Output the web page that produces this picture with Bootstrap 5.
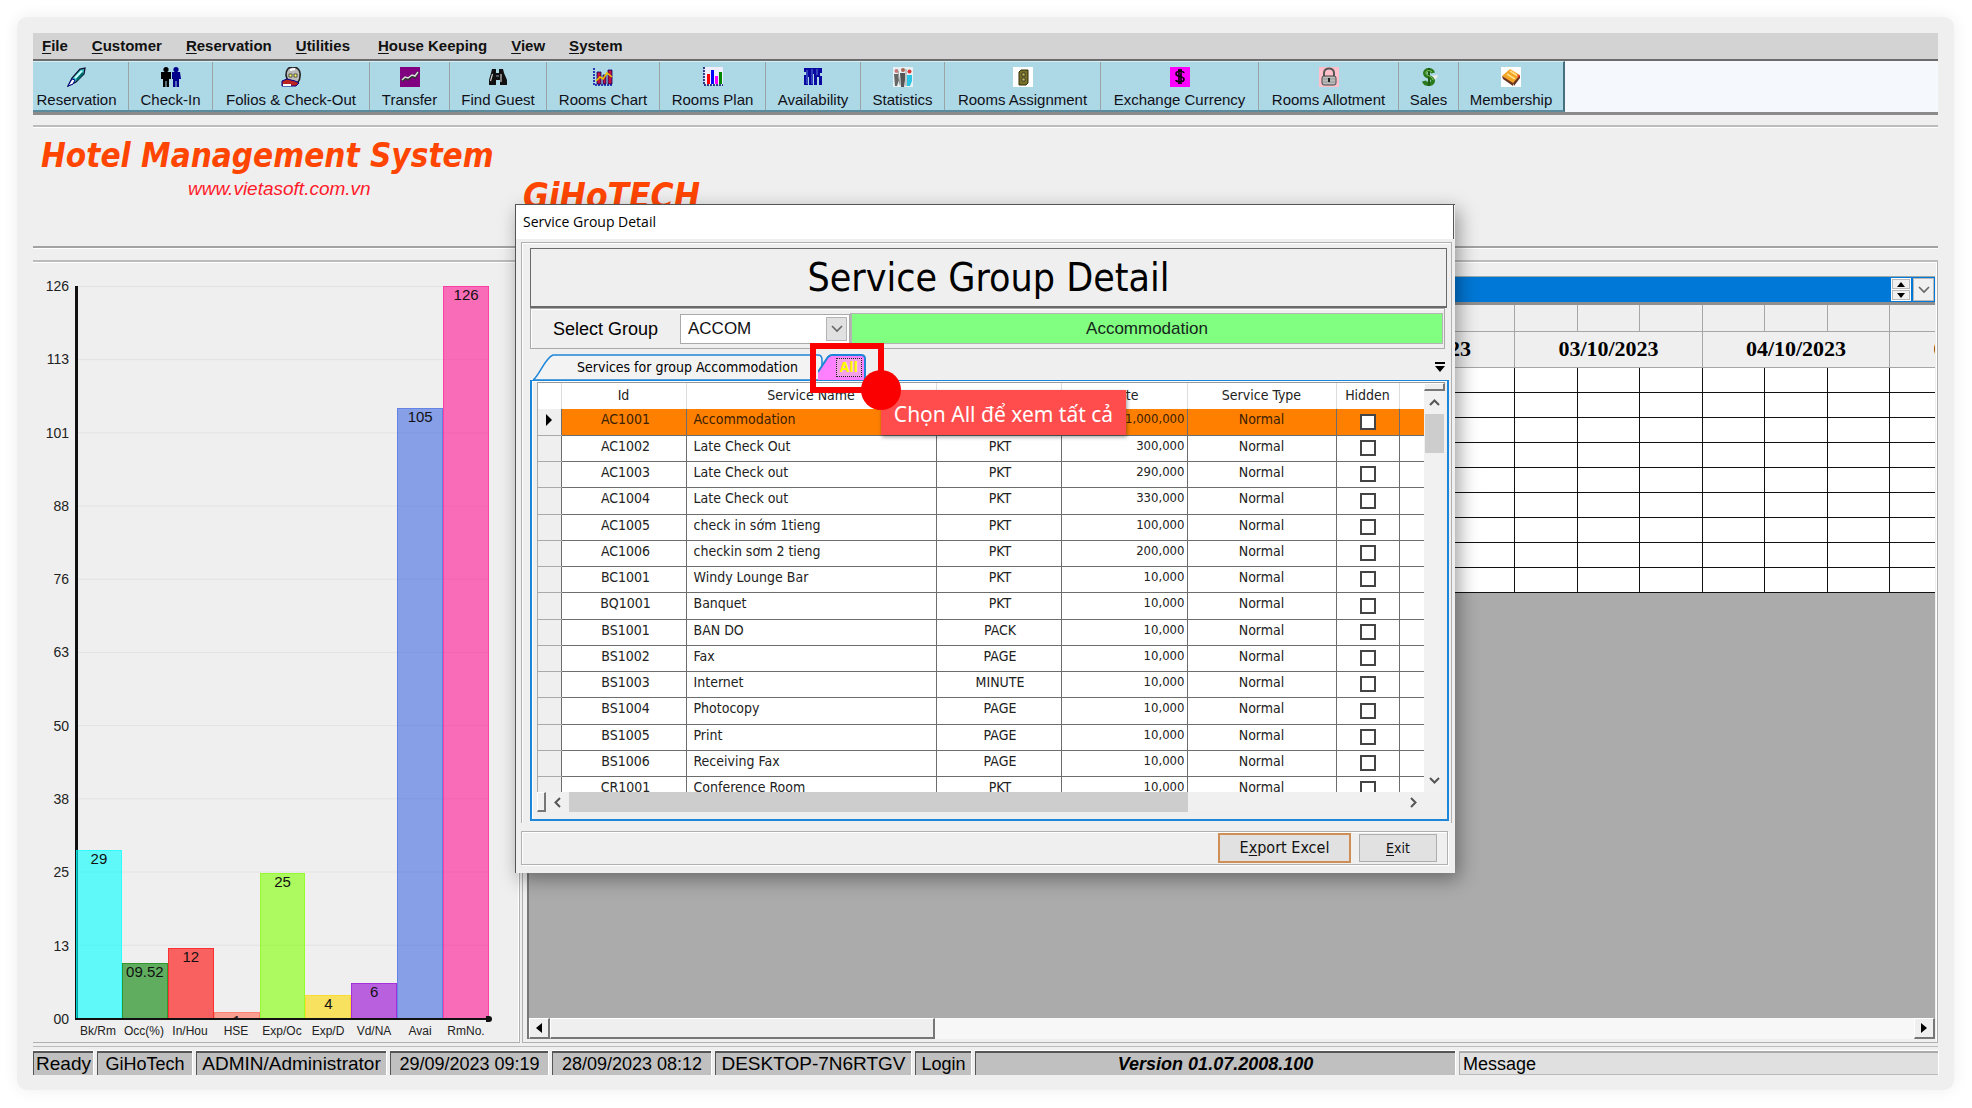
<!DOCTYPE html>
<html lang="vi">
<head>
<meta charset="utf-8">
<meta name="viewport" content="width=device-width, initial-scale=1">
<title>Hotel Management System</title>
<link href="https://cdn.jsdelivr.net/npm/bootstrap@5.3.0/dist/css/bootstrap.min.css" rel="stylesheet">
<style>
:root{--face:#efefef;--line:#a9a9a9;--blue:#1e86d8}
body{background:#fff;color:#000;font-family:"Liberation Sans",Arial,sans-serif;font-size:15px;line-height:18px}
button{color:inherit;font:inherit}
.shell{min-height:100vh;padding:17px 18px 18px 17px}
.frame{min-width:0;background:var(--face);border-radius:10px;box-shadow:0 0 16px rgba(0,0,0,.07);padding:16px 16px 15px}
.app{min-width:0}
.menubar{background:#d3d3d3;height:28px;border-bottom:2px solid #6c6c6c;padding-left:9px;gap:24px;font-weight:bold}
.menubar a{color:#111;text-decoration:none}
u{text-underline-offset:2px}
.toolbar{background:#f5f8fd;height:54px;border-bottom:3px solid #8b8b8b}
.toolset{background:#add8e6;border-top:1px solid #d6eef6;border-right:2px solid #47707f;border-bottom:2px solid #5b8b9c}
.tool{background:none;border:0;border-right:1px solid #9aa3a6;padding:5px 0 0;gap:4px;color:#101018;white-space:nowrap}
.tool:last-child{border-right:0}
.tool svg{width:20px;height:20px}
.w1{width:96px;padding-right:8px}.w2{width:84px}.w3{width:157px}.w4{width:80px}.w5{width:97px}.w6{width:113px}.w7{width:106px}.w8{width:95px}.w9{width:84px}.w10{width:156px}.w11{width:158px}.w12{width:140px}.w13{width:60px}.w14{width:104px}
.banner{height:123px;margin-top:10px;border-top:2px solid #bcbcbc;border-bottom:2px solid #a3a3a3;box-shadow:inset 0 1px #fff,0 1px #fff}
.brand{width:490px;padding:10px 0 0 8px;color:#ff4500}
.brand2{padding-top:50px;color:#ff4500}
.bigname{font:italic bold 33px/38px "DejaVu Sans Condensed","DejaVu Sans",sans-serif;margin:0;white-space:nowrap}
.brand2 .bigname{font-size:35px}
.site{font-style:italic;font-size:19px;line-height:28px;color:#ff1a2a;padding-left:147px}
.work{margin-top:12px;border-top:2px solid #bcbcbc}
.pane{border:1px solid #b0b0b0;border-width:0 1px 1px 0;box-shadow:inset 0 1px #fff,inset -1px 0 #fff}
.chartpane{width:487px;padding:24px 30px 2px 0}
.ylab{width:36px;margin:-8px 6px 13px 0;font-size:14px;line-height:16px;text-align:right;color:#222}
.plot{border-left:3px solid #111;border-bottom:2px solid #111;background:linear-gradient(#e2e2e2 1px,transparent 1px) 0 0/100% 10%}
.plot i{right:-3px;bottom:-4px;width:6px;height:6px;background:#111;border-radius:0 3px 3px 0}
.colbar{flex:1 1 0;text-align:center;font-size:15px;line-height:16px;overflow:hidden;background:rgba(var(--c),.6);border:1px solid rgba(var(--c),.5);border-bottom:0;color:#111}
.colbar:first-child{margin-left:-2px}
.xlab{height:20px;font-size:12px;line-height:22px;color:#222}
.xlab span{flex:1 1 0;text-align:center}
.planpane{margin-left:2px;border-left:1px solid #b0b0b0;padding:14px 2px 3px 4px;min-width:0}
.plan{border-left:2px solid #777;min-width:0}
.planbar{background:#0078d7;height:29px;border-top:1px solid #9aa;border-bottom:3px solid #8f8f8f;padding:1px 1px;gap:2px}
.spin{width:20px;background:#fff;padding:1px;gap:1px}
.spin button,.drop{background:#f0f0f0;border:1px solid #b9b9b9;padding:0;line-height:0}
.drop{width:21px}
.plangrid{background:#ababab;overflow:hidden;min-width:0}
.plangrid table{table-layout:fixed;width:1548px;border-collapse:collapse;background:#fff}
.plangrid col{width:62px}.plangrid col:nth-child(odd){width:63px}.plangrid col:first-child{width:48px}
.plangrid th{background:var(--face);border:1px solid #a6a6a6;border-top:0;padding:0;height:26px}
.plangrid tr+tr th{height:36px;font:bold 22px/24px "Liberation Serif",serif;text-align:center}
.plangrid td{border:1px solid #111;height:25px;padding:0}
.plangrid thead th:first-child{border-left:0}
.hbar{height:21px;background:#f7f7f7}
.hbar button,.hbar div{background:var(--face);border:1px solid #fff;border-right:2px solid #777;border-bottom:2px solid #777;padding:0;line-height:0}
.hbar button{width:21px}
.hbar div{width:385px}
.status{margin-top:3px;padding-top:4px;border-top:1px solid #bbb;gap:4px;font-size:18px;line-height:22px;white-space:nowrap}
.status span{background:#c0c0c0;border-top:2px solid #555;border-left:1px solid #555;height:24px;box-shadow:0 -1px #fff,1px 0 #fff;text-align:center}
.status .msg{background:#e0e0e0;border-top-color:#aaa;border-left-color:#aaa;border-bottom:1px solid #bbb;text-align:left;padding-left:3px}
.status .wide{font-size:19px}
.s1{width:60px}.s2{width:95px}.s3{width:190px}.s4{width:158px}.s5{width:159px}.s6{width:196px}.s7{width:56px}.s8{width:480px}

/* dialog window */
.dlg{position:absolute;left:482px;top:171px;width:940px;background:var(--face);border-left:1px solid #555;border-top:1px solid #555;box-shadow:4px 6px 18px rgba(0,0,0,.38);font-family:"DejaVu Sans Condensed","DejaVu Sans",sans-serif;font-size:14px}
.dlgtitle{background:#fff;border-right:1px solid #555;height:34px;margin-right:1px;padding-left:7px;font:14px/34px "Open Sans",sans-serif}
.dlgbody{margin:3px 3px 0 5px;border:1px solid #b0b0b0;border-bottom:0;box-shadow:inset 1px 1px #fff;padding:5px 2px 2px 8px}
.heading{margin:0 2px 0 0;border:1px solid #6a6a6a;border-bottom-width:2px;height:60px;font-size:39px;line-height:57px;font-weight:normal;text-align:center}
.pick{border:1px solid #a9a9a9;height:41px;margin-right:4px;padding:4px 1px 4px 22px;font-family:"Liberation Sans",sans-serif;box-shadow:inset 1px 1px #fff}
.pick label{font-size:18px;width:127px}
.pick select{appearance:none;border:1px solid #a9a9a9;background:#fff;width:170px;height:30px;padding-left:7px;font-size:17px;color:#111;border-radius:0}
.pick .arrow{right:3px;top:3px;bottom:3px;width:21px;background:#e1e1e1;border:1px solid #b4b4b4;pointer-events:none}
.pick output{background:#80ff80;border:1px solid #b4b4b4;border-left:2px solid #b4b4b4;font-size:17px;color:#15251a}
.tabs{height:26px;margin:5px 4px 0 3px}
.tabs button{background:none;border:0;padding:0;height:26px;z-index:1;white-space:nowrap}
.tabs svg.shape{position:absolute;left:0;top:0;z-index:-1}
.tab1{width:290px;padding-left:44px!important;text-align:left}
.tab2{width:48px;margin-left:-5px;padding-left:14px!important;color:#ff0;font-weight:bold!important;z-index:2!important}
.tab2 span{border:1px dotted #222;padding:0 3px;line-height:17px;display:inline-block;background:#f3a0e8}
.sheet{border:2px solid var(--blue);border-top-width:1px;height:441px;padding:1px 2px 6px 5px;box-shadow:inset 1px 1px #fff}
.viewport{height:410px;overflow:hidden;border-top:1px solid #999;border-left:1px solid #aaa}
.rows{border-collapse:collapse;table-layout:fixed;width:100%;background:#fff;color:#222}
.rows th{height:26px;padding:0 0 2px;font-weight:normal;text-align:center;border-right:1px solid #ddd;white-space:nowrap}
.rows td{height:26px;padding:0 0 5px;border:1px solid #6d6d6d;border-top:0;line-height:16px;text-align:center;white-space:nowrap}
.rows tbody tr:nth-child(4n) td{height:27px}
.rows td:first-child{background:var(--face);border-left:0;border-bottom-color:#aaa}
.rows td:nth-child(2){padding-left:4px}
.rows td:nth-child(3){text-align:left;padding-left:7px}
.rows td:nth-child(4){padding-left:3px}
.rows td:nth-child(5){text-align:right;padding-right:2px;font-size:13px}
.rows td:nth-child(7){padding:0}
.rows td:last-child,.rows th:last-child{border-right:0}
.rows .cur td{background:#ff8000;color:#3a2000}
.rows .cur td:first-child{background:var(--face)}
.rows .form-check-input{width:16px;height:16px;border:2px solid #444;border-radius:0;margin:0;vertical-align:top;background:#fff}
.vbar{width:21px;background:#f1f1f1}
.vbar .split{height:8px;border:1px solid #fff;border-right:2px solid #777;border-bottom:2px solid #777;background:#eee}
.vbar .thumb{height:39px;background:#cdcdcd;margin:0 1px}
.vbar button,.sbar button{border:0;background:none;padding:0;line-height:0}
.sbar{height:20px;background:#f0f0f0}
.sbar .split{width:9px;border:1px solid #fff;border-right:2px solid #777;border-bottom:2px solid #777}
.sbar .thumb{width:619px;background:#cdcdcd}
.foot{margin:8px 7px 8px 5px;height:34px;border:1px solid #b0b0b0;box-shadow:inset 1px 1px #fff,1px 1px #fff;padding:1px 10px 1px 0;gap:8px}
.foot .btn{border-radius:0;background:#e1e1e1;border:1px solid #adadad;padding:0;font-size:14px;line-height:16px;color:#111}
.foot .big{width:133px;height:30px;border:2px solid #cf8e55;font-size:16px;line-height:18px}
.foot .sm{width:78px;height:28px}
/* tutorial call-out */
.ring{position:absolute;left:777px;top:310px;width:74px;height:50px;border:6px solid #fa0000;z-index:5}
.dot{position:absolute;left:828px;top:337px;width:40px;height:40px;border-radius:50%;background:#fa0000;z-index:7}
.tip{position:absolute;left:848px;top:357px;width:245px;height:45px;background:#ff4c4c;color:#fff;z-index:6;font:21px/48px "Noto Sans",sans-serif;text-align:center;box-shadow:1px 2px 4px rgba(0,0,0,.4);white-space:nowrap}
</style>
<script src="https://cdn.jsdelivr.net/npm/bootstrap@5.3.0/dist/js/bootstrap.bundle.min.js"></script>
</head>
<body>
<div class="shell d-flex">
<div class="frame flex-fill d-flex">
<div class="app flex-fill d-flex flex-column position-relative">

<nav class="menubar d-flex align-items-center" aria-label="Menu">
  <a href="#"><u>F</u>ile</a><a href="#"><u>C</u>ustomer</a><a href="#"><u>R</u>eservation</a><a href="#"><u>U</u>tilities</a><a href="#" class="ms-1"><u>H</u>ouse Keeping</a><a href="#"><u>V</u>iew</a><a href="#"><u>S</u>ystem</a>
</nav>

<div class="toolbar d-flex">
 <div class="toolset d-flex">
  <button class="tool w1 d-flex flex-column align-items-center"><svg viewBox="0 0 20 20"><path d="M1 19l4-8 8-9 5-1-1 6-8 8z" fill="#3bb" stroke="#113" stroke-width="1.3"/><path d="M1 19l5-2 2-4-3-1z" fill="#fff" stroke="#00008b"/><path d="M8 11l7-7" stroke="#cff" stroke-width="2"/><path d="M10 13l6-7" stroke="#066" stroke-width="2.4"/></svg>Reservation</button>
  <button class="tool w2 d-flex flex-column align-items-center"><svg viewBox="0 0 20 20"><g fill="#000"><circle cx="5" cy="2.6" r="2.6"/><path d="M0 5h10v7H8v8H5.5v-6h-1v6H2v-8H0z"/></g><g fill="#00008b"><circle cx="15" cy="2.6" r="2.6"/><path d="M11 5h8l1 7h-2v8h-2.500v-6h-1v6H12v-8h-1z"/></g></svg>Check-In</button>
  <button class="tool w3 d-flex flex-column align-items-center"><svg viewBox="0 0 20 20"><path d="M5 8C5 2 8 0 12 0s8 3 7 9c0 5-3 8-7 8s-6-3-7-9z" fill="#bbb" stroke="#222" stroke-width="1.6"/><path d="M8 7h3v3H8zm5 0h3v3h-3z" fill="#ff6" stroke="#222" stroke-width=".7"/><path d="M1 14l5-2 8 2 4 2-3 3H1z" fill="#b22" stroke="#00008b"/><path d="M2 17h8v2H2z" fill="#fff"/><path d="M9 3l5-1" stroke="#fff" stroke-width="2"/></svg>Folios &amp; Check-Out</button>
  <button class="tool w4 d-flex flex-column align-items-center"><svg viewBox="0 0 20 20"><path d="M0 0h20v20H0z" fill="#800080"/><path d="M2 14l3-3 3 1 4-3 3 1 3-5" fill="none" stroke="#333" stroke-width="3"/><path d="M2 13l3-3 3 1 4-3 3 1 3-4" fill="none" stroke="#ddd" stroke-width="1.5"/></svg>Transfer</button>
  <button class="tool w5 d-flex flex-column align-items-center"><svg viewBox="0 0 20 20"><path d="M4 2h4v4h3V2h4l1 4 3 7v5h-7v-5H8v5H1v-5l2-7z" fill="#111"/><path d="M4.5 7l-2 7M13 7v8" stroke="#ccc" stroke-width="1.2"/><path d="M8 8h3v2H8z" fill="#556"/></svg>Find Guest</button>
  <button class="tool w6 d-flex flex-column align-items-center"><svg viewBox="0 0 20 20"><path d="M1 1v17h19" fill="none" stroke="#00a" stroke-width="1.5" stroke-dasharray="2 1"/><path d="M4 5h4v12H4zM10 8h3v9h-3zM15 3h4v14h-4z" fill="#c1123f" stroke="#006" stroke-width=".8"/><path d="M3 14l4-4 3 2 4-6 5 4" fill="none" stroke="#e8c000" stroke-width="1.6"/></svg>Rooms Chart</button>
  <button class="tool w7 d-flex flex-column align-items-center"><svg viewBox="0 0 20 20"><path d="M1 0h19v18H1z" fill="#eef"/><path d="M1 0v18h19" fill="none" stroke="#006" stroke-width="1.5" stroke-dasharray="2 1"/><path d="M4 7h3v10H4z" fill="#f00"/><path d="M8 3h3v14H8z" fill="#00f"/><path d="M12 9h3v8h-3z" fill="#f0f"/><path d="M16 5h3v12h-3z" fill="#080"/></svg>Rooms Plan</button>
  <button class="tool w8 d-flex flex-column align-items-center"><svg viewBox="0 0 20 20"><path d="M1 1h18v5h-2v3h2v9h-3v-8h-2v8h-3V7h-1v11H6v-8H5v8H1V8h2V5H1z" fill="#0808a0"/><path d="M4 3v14M9 2v15M14 2v6" stroke="#5a7ad8"/></svg>Availability</button>
  <button class="tool w9 d-flex flex-column align-items-center"><svg viewBox="0 0 20 20"><path d="M0 0h20v20H0z" fill="#e8f1f3"/><path d="M1 7h4l1 6-2 6H2z" fill="#666"/><circle cx="3.5" cy="4" r="2" fill="#c77"/><path d="M7 6h5v7l-1 7H8z" fill="#555"/><circle cx="10" cy="3" r="2" fill="#a65"/><path d="M14 8h5v6l-2 5h-3z" fill="#2cc5e6"/><circle cx="16.5" cy="4.5" r="2" fill="#d33"/><path d="M5 4l2 14M13 2v17" stroke="#999"/></svg>Statistics</button>
  <button class="tool w10 d-flex flex-column align-items-center"><svg viewBox="0 0 20 20"><path d="M0 0h20v20H0z" fill="#fff"/><path d="M6 5l2-2h7v13l-2 2H6z" fill="#77702a" stroke="#332f08"/><path d="M9 6h3v3H9zM9 11h3v3H9z" fill="#c9c060" stroke="#222" stroke-width=".7"/></svg>Rooms Assignment</button>
  <button class="tool w11 d-flex flex-column align-items-center"><svg viewBox="0 0 20 20"><path d="M0 0h20v20H0z" fill="#f0f"/><path d="M14 6c0-2-8-3-8 1 0 3 8 2 8 5 0 4-8 3-8 1M9 2v15M11 2v15" fill="none" stroke="#101" stroke-width="1.7"/></svg>Exchange Currency</button>
  <button class="tool w12 d-flex flex-column align-items-center"><svg viewBox="0 0 20 20"><path d="M0 0h20v20H0z" fill="#ffc0cb"/><path d="M5 9V6c0-6 10-6 10 0v3" fill="none" stroke="#555" stroke-width="2"/><rect x="3" y="9" width="14" height="9" rx="2" fill="#bbb" stroke="#444"/><path d="M4 12h12M4 15h12" stroke="#999"/><path d="M10 11v4" stroke="#222" stroke-width="2"/></svg>Rooms Allotment</button>
  <button class="tool w13 d-flex flex-column align-items-center"><svg viewBox="0 0 20 20"><path d="M11 9l8-1-2 4-6 1z" fill="#eee"/><path d="M14 6c-1-4-8-4-8 0 0 5 8 3 8 8 0 4-8 4-9 0" fill="none" stroke="#2b7a1c" stroke-width="4"/><path d="M10 1v18" stroke="#1d5c12" stroke-width="2"/><path d="M13 5c-2-2-6-2-6 1 0 3 7 3 7 7" fill="none" stroke="#8fd070"/></svg>Sales</button>
  <button class="tool w14 d-flex flex-column align-items-center"><svg viewBox="0 0 20 20"><path d="M0 0h20v20H0z" fill="#fff"/><path d="M1 9l8-7 10 6-7 9z" fill="#f4a526"/><path d="M1 9l11 7v3L2 12zM12 16l7-8v3l-6 8z" fill="#6b3420"/><path d="M6 7l8 5M9 4l8 5" stroke="#ffe08a" stroke-width="1.5"/><path d="M16 7l3 2-2 2z" fill="#e33"/></svg>Membership</button>
 </div>
</div>

<header class="banner d-flex">
  <div class="brand"><h1 class="bigname">Hotel Management System</h1><div class="site">www.vietasoft.com.vn</div></div>
  <div class="brand2"><h2 class="bigname">GiHoTECH</h2></div>
</header>

<main class="work flex-fill d-flex">
  <section class="pane chartpane flex-shrink-0 d-flex" aria-label="Chart">
    <div class="ylab d-flex flex-column justify-content-between"><span>126</span><span>113</span><span>101</span><span>88</span><span>76</span><span>63</span><span>50</span><span>38</span><span>25</span><span>13</span><span>00</span></div>
    <div class="flex-fill d-flex flex-column">
      <div class="plot flex-fill d-flex align-items-end position-relative">
        <div class="colbar" style="height:23%;--c:0,255,255">29</div>
        <div class="colbar" style="height:7.5%;--c:0,128,0">09.52</div>
        <div class="colbar" style="height:9.5%;--c:255,0,0">12</div>
        <div class="colbar" style="height:.8%;--c:253,105,83">1</div>
        <div class="colbar" style="height:19.8%;--c:127,255,0">25</div>
        <div class="colbar" style="height:3.2%;--c:255,215,0">4</div>
        <div class="colbar" style="height:4.8%;--c:148,0,211">6</div>
        <div class="colbar" style="height:83.3%;--c:65,105,225">105</div>
        <div class="colbar" style="height:100%;--c:255,20,147">126</div>
        <i class="position-absolute"></i>
      </div>
      <div class="xlab d-flex"><span>Bk/Rm</span><span>Occ(%)</span><span>In/Hou</span><span>HSE</span><span>Exp/Oc</span><span>Exp/D</span><span>Vd/NA</span><span>Avai</span><span>RmNo.</span></div>
    </div>
  </section>

  <section class="pane planpane flex-fill d-flex" aria-label="Room plan">
    <div class="plan flex-fill d-flex flex-column">
      <div class="planbar d-flex justify-content-end">
        <div class="spin d-flex flex-column"><button class="flex-fill" aria-label="Up"><svg width="8" height="5"><path d="M0 5l4-5 4 5z"/></svg></button><button class="flex-fill" aria-label="Down"><svg width="8" height="5"><path d="M0 0h8L4 5z"/></svg></button></div>
        <button class="drop" aria-label="Open"><svg width="12" height="8"><path d="M1 1l5 5 5-5" fill="none" stroke="#666" stroke-width="1.6"/></svg></button>
      </div>
      <div class="plangrid flex-fill">
        <table>
          <colgroup></colgroup>
          <thead>
            <tr class="slots"></tr>
            <tr><th></th><th colspan="3"></th><th colspan="3"></th><th colspan="3"></th><th colspan="3"></th><th colspan="3">02/10/2023</th><th colspan="3">03/10/2023</th><th colspan="3">04/10/2023</th><th colspan="3">05/10/2023</th></tr>
          </thead>
          <tbody></tbody>
        </table>
      </div>
      <div class="hbar d-flex"><button aria-label="Left"><svg width="6" height="10"><path d="M6 0v10L0 5z"/></svg></button><div></div><button class="ms-auto" aria-label="Right"><svg width="6" height="10"><path d="M0 0v10l6-5z"/></svg></button></div>
    </div>
  </section>
</main>

<footer class="status d-flex">
  <span class="s1 wide">Ready</span><span class="s2">GiHoTech</span><span class="s3 wide">ADMIN/Administrator</span><span class="s4">29/09/2023 09:19</span><span class="s5">28/09/2023 08:12</span><span class="s6 wide">DESKTOP-7N6RTGV</span><span class="s7">Login</span><span class="s8 fw-bold fst-italic">Version 01.07.2008.100</span><span class="msg flex-fill">Message</span>
</footer>

<div class="dlg" role="dialog" aria-label="Service Group Detail">
  <div class="dlgtitle">Service Group Detail</div>
  <div class="dlgbody">
    <h3 class="heading">Service Group Detail</h3>
    <div class="pick d-flex align-items-center">
      <label for="grp">Select Group</label>
      <div class="position-relative"><select id="grp"><option>ACCOM</option></select><span class="arrow position-absolute d-flex align-items-center justify-content-center"><svg width="12" height="8"><path d="M1 1l5 5 5-5" fill="none" stroke="#666" stroke-width="1.6"/></svg></span></div>
      <output class="flex-fill d-flex align-items-center justify-content-center align-self-stretch">Accommodation</output>
    </div>
    <div class="tabs d-flex">
      <button class="tab1 position-relative"><svg class="shape" width="290" height="26"><path d="M0 26C6 22 12 4 20 1h265q4 0 4 5v20z" fill="#f3f3f3" stroke="#1e86d8" stroke-width="1.5"/></svg>Services for group Accommodation</button>
      <button class="tab2 position-relative"><svg class="shape" width="48" height="26"><path d="M0 26V18L10 3q2-2 4-2h29q4 0 4 4v21z" fill="#ff80ff"/><path d="M0 18L10 3q2-2 4-2h29q4 0 4 4v21" fill="none" stroke="#1e86d8" stroke-width="2"/></svg><span>All</span></button>
      <svg class="ms-auto align-self-center" width="10" height="10"><path d="M0 0h10v2H0zM0 4h10L5 10z"/></svg>
    </div>
    <div class="sheet">
      <div class="d-flex viewport">
        <div class="flex-fill overflow-hidden">
        <table class="rows">
          <colgroup><col style="width:23px"><col style="width:125px"><col style="width:250px"><col style="width:125px"><col style="width:126px"><col style="width:149px"><col style="width:63px"><col></colgroup>
          <thead><tr><th></th><th>Id</th><th>Service Name</th><th></th><th>Rate</th><th>Service Type</th><th>Hidden</th><th></th></tr></thead>
          <tbody>
          <tr class="cur"><td><svg width="7" height="12"><path d="M0 0l6 6-6 6z"/></svg></td><td>AC1001</td><td>Accommodation</td><td></td><td>1,000,000</td><td>Normal</td><td><input class="form-check-input" type="checkbox" aria-label="Hidden"></td><td></td></tr>
          <tr><td></td><td>AC1002</td><td>Late Check Out</td><td>PKT</td><td>300,000</td><td>Normal</td><td><input class="form-check-input" type="checkbox" aria-label="Hidden"></td><td></td></tr>
          <tr><td></td><td>AC1003</td><td>Late Check out</td><td>PKT</td><td>290,000</td><td>Normal</td><td><input class="form-check-input" type="checkbox" aria-label="Hidden"></td><td></td></tr>
          <tr><td></td><td>AC1004</td><td>Late Check out</td><td>PKT</td><td>330,000</td><td>Normal</td><td><input class="form-check-input" type="checkbox" aria-label="Hidden"></td><td></td></tr>
          <tr><td></td><td>AC1005</td><td>check in sớm 1tieng</td><td>PKT</td><td>100,000</td><td>Normal</td><td><input class="form-check-input" type="checkbox" aria-label="Hidden"></td><td></td></tr>
          <tr><td></td><td>AC1006</td><td>checkin sơm 2 tieng</td><td>PKT</td><td>200,000</td><td>Normal</td><td><input class="form-check-input" type="checkbox" aria-label="Hidden"></td><td></td></tr>
          <tr><td></td><td>BC1001</td><td>Windy Lounge Bar</td><td>PKT</td><td>10,000</td><td>Normal</td><td><input class="form-check-input" type="checkbox" aria-label="Hidden"></td><td></td></tr>
          <tr><td></td><td>BQ1001</td><td>Banquet</td><td>PKT</td><td>10,000</td><td>Normal</td><td><input class="form-check-input" type="checkbox" aria-label="Hidden"></td><td></td></tr>
          <tr><td></td><td>BS1001</td><td>BAN DO</td><td>PACK</td><td>10,000</td><td>Normal</td><td><input class="form-check-input" type="checkbox" aria-label="Hidden"></td><td></td></tr>
          <tr><td></td><td>BS1002</td><td>Fax</td><td>PAGE</td><td>10,000</td><td>Normal</td><td><input class="form-check-input" type="checkbox" aria-label="Hidden"></td><td></td></tr>
          <tr><td></td><td>BS1003</td><td>Internet</td><td>MINUTE</td><td>10,000</td><td>Normal</td><td><input class="form-check-input" type="checkbox" aria-label="Hidden"></td><td></td></tr>
          <tr><td></td><td>BS1004</td><td>Photocopy</td><td>PAGE</td><td>10,000</td><td>Normal</td><td><input class="form-check-input" type="checkbox" aria-label="Hidden"></td><td></td></tr>
          <tr><td></td><td>BS1005</td><td>Print</td><td>PAGE</td><td>10,000</td><td>Normal</td><td><input class="form-check-input" type="checkbox" aria-label="Hidden"></td><td></td></tr>
          <tr><td></td><td>BS1006</td><td>Receiving Fax</td><td>PAGE</td><td>10,000</td><td>Normal</td><td><input class="form-check-input" type="checkbox" aria-label="Hidden"></td><td></td></tr>
          <tr><td></td><td>CR1001</td><td>Conference Room</td><td>PKT</td><td>10,000</td><td>Normal</td><td><input class="form-check-input" type="checkbox" aria-label="Hidden"></td><td></td></tr>
          </tbody>
        </table>
        </div>
        <div class="vbar flex-shrink-0 d-flex flex-column">
          <div class="split"></div>
          <button class="py-2" aria-label="Scroll up"><svg width="11" height="7"><path d="M1 6l4.500-4.500L10 6" fill="none" stroke="#555" stroke-width="2"/></svg></button>
          <div class="thumb"></div>
          <button class="mt-auto py-2" aria-label="Scroll down"><svg width="11" height="7"><path d="M1 1l4.500 4.500L10 1" fill="none" stroke="#555" stroke-width="2"/></svg></button>
        </div>
      </div>
      <div class="sbar d-flex"><div class="split"></div><button class="px-2" aria-label="Scroll left"><svg width="7" height="11"><path d="M6 1L1.500 5.500 6 10" fill="none" stroke="#555" stroke-width="2"/></svg></button><div class="thumb"></div><button class="ms-auto me-4 px-1" aria-label="Scroll right"><svg width="7" height="11"><path d="M1 1l4.500 4.500L1 10" fill="none" stroke="#555" stroke-width="2"/></svg></button></div>
    </div>
  </div>
  <div class="foot d-flex justify-content-end align-items-center">
    <button class="btn big">E<u>x</u>port Excel</button><button class="btn sm"><u>E</u>xit</button>
  </div>
</div>

<div class="ring"></div>
<div class="tip" role="tooltip">Chọn All để xem tất cả</div>
<div class="dot"></div>

</div>
</div>
</div>
<script>
// Empty room-plan cells: one margin column, then three slots for each of eight days.
var plan = document.querySelector('.plangrid table');
plan.querySelector('colgroup').innerHTML = '<col>'.repeat(25);
plan.querySelector('.slots').innerHTML = '<th></th>'.repeat(25);
plan.tBodies[0].innerHTML = ('<tr>' + '<td></td>'.repeat(25) + '</tr>').repeat(9);
</script>
</body>
</html>
